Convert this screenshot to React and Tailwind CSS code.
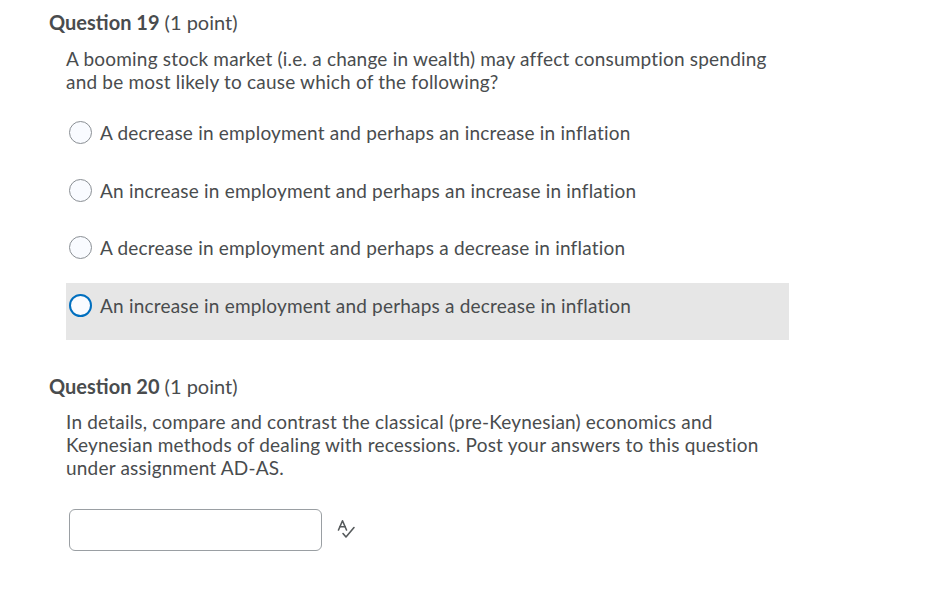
import React from "react";

const options = [
  "A decrease in employment and perhaps an increase in inflation",
  "An increase in employment and perhaps an increase in inflation",
  "A decrease in employment and perhaps a decrease in inflation",
  "An increase in employment and perhaps a decrease in inflation",
];

function Radio({ selected }) {
  return (
    <span
      className={
        "box-border inline-block w-[23px] h-[23px] rounded-full bg-[#f9fbff] shrink-0 " +
        (selected ? "border-2 border-[#006fbf]" : "border border-[#8a8f94]")
      }
    />
  );
}

function SpellIcon() {
  return (
    <svg width="22" height="22" viewBox="0 0 22 22" fill="none" stroke="#565a5c" strokeWidth="1.6" strokeLinecap="round" strokeLinejoin="round">
      <path d="M2.5 11 L6.5 1.8 L10.5 11" />
      <path d="M4 7.8 H9" />
      <path d="M7 14.5 L10 18 L18 8.5" />
    </svg>
  );
}

export default function App() {
  return (
    <div
      className="w-[949px] h-[601px] bg-white text-[#494c4e] pl-[49px] pt-[10px]"
      style={{ fontFamily: "Lato, 'Open Sans', sans-serif" }}
    >
      <h2 className="text-[20px] leading-[24px]">
        <span className="font-bold">Question 19</span> (1 point)
      </h2>
      <div className="pl-[17px] pt-[13px]">
        <p className="text-[19px] leading-[23px] tracking-[0.2px]">
          A booming stock market (i.e. a change in wealth) may affect consumption spending
          <br />
          and be most likely to cause which of the following?
        </p>
        <div className="w-[723px] mt-[17px] flex flex-col">
          {options.map((o, i) => (
            <div
              key={i}
              className={
                "h-[57.5px] flex items-start pt-[11px] pl-[3px] " +
                (i === 3 ? "bg-[#e6e6e6]" : "")
              }
            >
              <div className="flex items-center h-[23px] gap-[8px]">
                <Radio selected={i === 3} />
                <span className="text-[19px] leading-[23px] tracking-[0.2px] whitespace-nowrap">{o}</span>
              </div>
            </div>
          ))}
        </div>
      </div>
      <h2 className="text-[20px] leading-[24px] mt-[34px]">
        <span className="font-bold">Question 20</span> (1 point)
      </h2>
      <div className="pl-[17px] pt-[12px]">
        <p className="text-[19px] leading-[23px] tracking-[0.2px]">
          In details, compare and contrast the classical (pre-Keynesian) economics and
          <br />
          Keynesian methods of dealing with recessions. Post your answers to this question
          <br />
          under assignment AD-AS.
        </p>
        <div className="flex items-center mt-[30px] pl-[3px] gap-[14px]">
          <div className="w-[253px] h-[42px] rounded-[6px] border border-[#9a9fa3] bg-white" />
          <SpellIcon />
        </div>
      </div>
    </div>
  );
}
